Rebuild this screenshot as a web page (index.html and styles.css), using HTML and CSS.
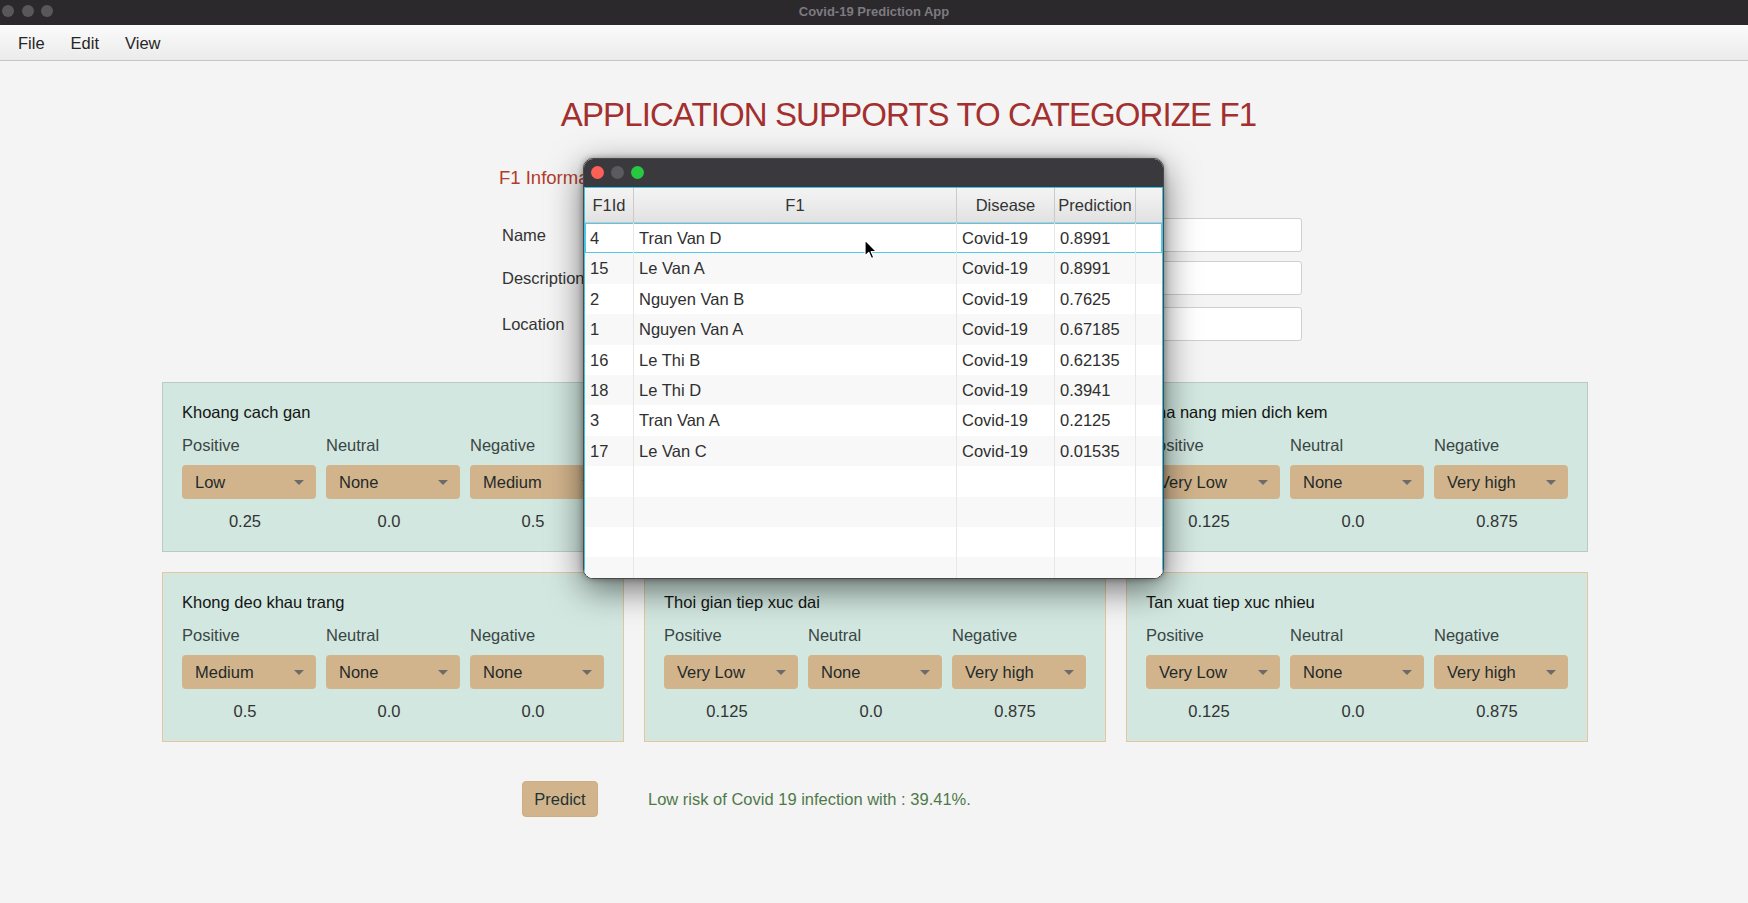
FILE: index.html
```html
<!DOCTYPE html>
<html>
<head>
<meta charset="utf-8">
<title>Covid-19 Prediction App</title>
<link rel="stylesheet" href="styles.css">
</head>
<body>
<div class="window">
  <div class="titlebar">
    <div class="lights"><span></span><span></span><span></span></div>
    <div class="wtitle">Covid-19 Prediction App</div>
    <div></div>
  </div>
  <div class="menubar"><span>File</span><span>Edit</span><span>View</span></div>

  <div class="main">
    <h1 class="apptitle">APPLICATION SUPPORTS TO CATEGORIZE F1</h1>

    <section class="info">
      <h2 class="info-head">F1 Information</h2>
      <div class="form">
        <div class="frow"><label>Name</label><div class="field"></div></div>
        <div class="frow"><label>Description</label><div class="field"></div></div>
        <div class="frow loc"><label>Location</label><div class="field"></div></div>
      </div>
    </section>

    <section class="cards">
      <div class="card top">
        <div class="card-title">Khoang cach gan</div>
        <div class="opts">
          <div class="opt"><div class="lbl">Positive</div><div class="combo"><span>Low</span><i></i></div><div class="val">0.25</div></div>
          <div class="opt"><div class="lbl">Neutral</div><div class="combo"><span>None</span><i></i></div><div class="val">0.0</div></div>
          <div class="opt"><div class="lbl">Negative</div><div class="combo"><span>Medium</span><i></i></div><div class="val">0.5</div></div>
        </div>
      </div>
      <div class="card top">
        <div class="card-title">Tiep xuc voi F0</div>
        <div class="opts">
          <div class="opt"><div class="lbl">Positive</div><div class="combo"><span>Low</span><i></i></div><div class="val">0.25</div></div>
          <div class="opt"><div class="lbl">Neutral</div><div class="combo"><span>None</span><i></i></div><div class="val">0.0</div></div>
          <div class="opt"><div class="lbl">Negative</div><div class="combo"><span>Medium</span><i></i></div><div class="val">0.5</div></div>
        </div>
      </div>
      <div class="card top">
        <div class="card-title">Kha nang mien dich kem</div>
        <div class="opts">
          <div class="opt"><div class="lbl">Positive</div><div class="combo"><span>Very Low</span><i></i></div><div class="val">0.125</div></div>
          <div class="opt"><div class="lbl">Neutral</div><div class="combo"><span>None</span><i></i></div><div class="val">0.0</div></div>
          <div class="opt"><div class="lbl">Negative</div><div class="combo"><span>Very high</span><i></i></div><div class="val">0.875</div></div>
        </div>
      </div>
      <div class="card bottom">
        <div class="card-title">Khong deo khau trang</div>
        <div class="opts">
          <div class="opt"><div class="lbl">Positive</div><div class="combo"><span>Medium</span><i></i></div><div class="val">0.5</div></div>
          <div class="opt"><div class="lbl">Neutral</div><div class="combo"><span>None</span><i></i></div><div class="val">0.0</div></div>
          <div class="opt"><div class="lbl">Negative</div><div class="combo"><span>None</span><i></i></div><div class="val">0.0</div></div>
        </div>
      </div>
      <div class="card bottom">
        <div class="card-title">Thoi gian tiep xuc dai</div>
        <div class="opts">
          <div class="opt"><div class="lbl">Positive</div><div class="combo"><span>Very Low</span><i></i></div><div class="val">0.125</div></div>
          <div class="opt"><div class="lbl">Neutral</div><div class="combo"><span>None</span><i></i></div><div class="val">0.0</div></div>
          <div class="opt"><div class="lbl">Negative</div><div class="combo"><span>Very high</span><i></i></div><div class="val">0.875</div></div>
        </div>
      </div>
      <div class="card bottom">
        <div class="card-title">Tan xuat tiep xuc nhieu</div>
        <div class="opts">
          <div class="opt"><div class="lbl">Positive</div><div class="combo"><span>Very Low</span><i></i></div><div class="val">0.125</div></div>
          <div class="opt"><div class="lbl">Neutral</div><div class="combo"><span>None</span><i></i></div><div class="val">0.0</div></div>
          <div class="opt"><div class="lbl">Negative</div><div class="combo"><span>Very high</span><i></i></div><div class="val">0.875</div></div>
        </div>
      </div>
    </section>

    <div class="predict-row">
      <button class="predict">Predict</button>
      <span class="result">Low risk of Covid 19 infection with : 39.41%.</span>
    </div>
  </div>

  <div class="popup">
    <div class="ptitle">
      <span class="pl red"></span><span class="pl gray"></span><span class="pl green"></span>
    </div>
    <div class="table">
      <div class="row head">
        <div class="c">F1Id</div><div class="c">F1</div><div class="c">Disease</div><div class="c">Prediction</div><div class="c"></div>
      </div>
      <div class="row sel"><div class="c">4</div><div class="c">Tran Van D</div><div class="c">Covid-19</div><div class="c">0.8991</div><div class="c"></div></div>
      <div class="row alt"><div class="c">15</div><div class="c">Le Van A</div><div class="c">Covid-19</div><div class="c">0.8991</div><div class="c"></div></div>
      <div class="row"><div class="c">2</div><div class="c">Nguyen Van B</div><div class="c">Covid-19</div><div class="c">0.7625</div><div class="c"></div></div>
      <div class="row alt"><div class="c">1</div><div class="c">Nguyen Van A</div><div class="c">Covid-19</div><div class="c">0.67185</div><div class="c"></div></div>
      <div class="row"><div class="c">16</div><div class="c">Le Thi B</div><div class="c">Covid-19</div><div class="c">0.62135</div><div class="c"></div></div>
      <div class="row alt"><div class="c">18</div><div class="c">Le Thi D</div><div class="c">Covid-19</div><div class="c">0.3941</div><div class="c"></div></div>
      <div class="row"><div class="c">3</div><div class="c">Tran Van A</div><div class="c">Covid-19</div><div class="c">0.2125</div><div class="c"></div></div>
      <div class="row alt"><div class="c">17</div><div class="c">Le Van C</div><div class="c">Covid-19</div><div class="c">0.01535</div><div class="c"></div></div>
      <div class="row"><div class="c"></div><div class="c"></div><div class="c"></div><div class="c"></div><div class="c"></div></div>
      <div class="row alt"><div class="c"></div><div class="c"></div><div class="c"></div><div class="c"></div><div class="c"></div></div>
      <div class="row"><div class="c"></div><div class="c"></div><div class="c"></div><div class="c"></div><div class="c"></div></div>
      <div class="row alt"><div class="c"></div><div class="c"></div><div class="c"></div><div class="c"></div><div class="c"></div></div>
    </div>
  </div>

  <svg class="cursor" width="14" height="22" viewBox="0 0 14 22">
    <path d="M1 1 L1 17 L4.8 13.4 L7.4 19.6 L9.8 18.6 L7.2 12.5 L12.4 12.5 Z" fill="#000" stroke="#fff" stroke-width="1.2" stroke-linejoin="round"/>
  </svg>
</div>
</body>
</html>
```

FILE: styles.css
```css
* { box-sizing: border-box; }
html, body { margin: 0; padding: 0; }
body {
  width: 1748px;
  height: 903px;
  overflow: hidden;
  background: #f4f4f4;
  font-family: "Liberation Sans", Arial, sans-serif;
  font-size: 16.5px;
  color: #333;
}
.window { position: relative; width: 1748px; height: 903px; overflow: hidden; }

.titlebar {
  height: 25px;
  background: #2c292d;
  display: grid;
  grid-template-columns: 1fr auto 1fr;
  align-items: center;
  padding-bottom: 3px;
}
.lights { display: flex; gap: 7.5px; padding-left: 2px; }
.lights span { width: 12px; height: 12px; border-radius: 50%; background: #59575c; }
.wtitle { color: #7d7b80; font-size: 13px; font-weight: bold; }

.menubar {
  height: 36px;
  background: linear-gradient(#fbfbfb, #ebebeb);
  border-bottom: 1px solid #c6c6c6;
  display: flex;
  align-items: center;
  padding-left: 5px;
  padding-top: 1px;
  color: #262626;
}
.menubar span { padding: 0 13px; }

.main { padding-top: 35px; }
.apptitle {
  margin: 0;
  font-weight: normal;
  font-size: 33px;
  letter-spacing: -0.9px;
  line-height: 38px;
  color: #a3302f;
  text-align: center;
  padding-left: 69px;
}

.info { margin-left: 499px; }
.info-head {
  margin: 33px 0 0 0;
  font-weight: normal;
  font-size: 18.5px;
  line-height: 22px;
  color: #b23c2c;
}
.form {
  margin-top: 29px;
  padding-left: 3px;
  display: flex;
  flex-direction: column;
  gap: 9px;
}
.frow {
  display: grid;
  grid-template-columns: 140px 660px;
  height: 34px;
  align-items: center;
}
.frow.loc { margin-top: 3px; }
.frow label { color: #333; }
.field {
  height: 34px;
  background: #fff;
  border: 1px solid #cfcfcf;
  border-radius: 3px;
}

.cards {
  margin: 41px 0 0 162px;
  display: grid;
  grid-template-columns: repeat(3, 462px);
  grid-auto-rows: 170px;
  gap: 20px;
}
.card {
  background: #d1e7df;
  border: 1px solid #b9cbc3;
  padding: 19px;
}
.card.bottom { border-color: #e6c69e; }
.card-title { line-height: 20px; color: #141414; }
.opts {
  margin-top: 13px;
  display: grid;
  grid-template-columns: repeat(3, 134px);
  column-gap: 10px;
}
.lbl { line-height: 20px; color: #3b4545; }
.combo {
  margin-top: 10px;
  height: 34px;
  background: #d2b48c;
  border-radius: 4px;
  display: flex;
  align-items: center;
  justify-content: space-between;
  padding: 0 12px 0 13px;
  color: #1f2a2a;
}
.combo i {
  width: 0; height: 0;
  border-left: 5.5px solid transparent;
  border-right: 5.5px solid transparent;
  border-top: 5.5px solid #6b6b6b;
}
.val {
  margin-top: 12px;
  line-height: 20px;
  text-align: center;
  padding-right: 8px;
  color: #333;
}

.predict-row {
  margin: 39px 0 0 522px;
  display: flex;
  align-items: center;
  gap: 50px;
}
.predict {
  height: 36px;
  width: 76px;
  padding: 0;
  background: #d2b48c;
  border: 1px solid #cbad86;
  border-radius: 4px;
  font-family: inherit;
  font-size: 16.5px;
  color: #1e3434;
}
.result { color: #4e7a4a; }

/* popup window overlay */
.popup {
  position: absolute;
  left: 583px;
  top: 158px;
  width: 581px;
  height: 421px;
  border: 1px solid #4a4a4a;
  border-radius: 10px;
  overflow: hidden;
  background: #fff;
  box-shadow: 0 10px 34px rgba(0,0,0,0.55), 0 0 6px rgba(0,0,0,0.35);
}
.ptitle {
  height: 28px;
  background: #3a393e;
  display: flex;
  align-items: center;
  gap: 7px;
  padding-left: 7px;
  padding-bottom: 1px;
}
.pl { width: 13px; height: 13px; border-radius: 50%; }
.pl.red { background: #fe5f57; }
.pl.gray { background: #5b5a5f; }
.pl.green { background: #28c840; }

.table {
  border: 1px solid #3cc4e6;
  border-bottom: none;
  height: 392px;
  overflow: hidden;
  background: #fff;
}
.row {
  display: grid;
  grid-template-columns: 49px 323px 98px 81px 1fr;
  height: 30.4px;
  background: #fff;
}
.row.alt { background: #f8f8f8; }
.row .c {
  border-right: 1px solid #e7e7e7;
  padding-left: 5px;
  line-height: 30px;
  white-space: nowrap;
  overflow: hidden;
  color: #2f2f2f;
}
.row .c:last-child { border-right: none; }
.row.head {
  height: 35px;
  background: linear-gradient(#f4f4f4, #e2e2e2);
  border-bottom: 1px solid #c6c6c6;
}
.row.head .c {
  line-height: 34px;
  text-align: center;
  padding-left: 0;
  border-right-color: #cacaca;
  color: #333;
}
.row.sel { box-shadow: inset 0 0 0 1px #55c8ea; }

.cursor { position: absolute; left: 864px; top: 239px; }
```
